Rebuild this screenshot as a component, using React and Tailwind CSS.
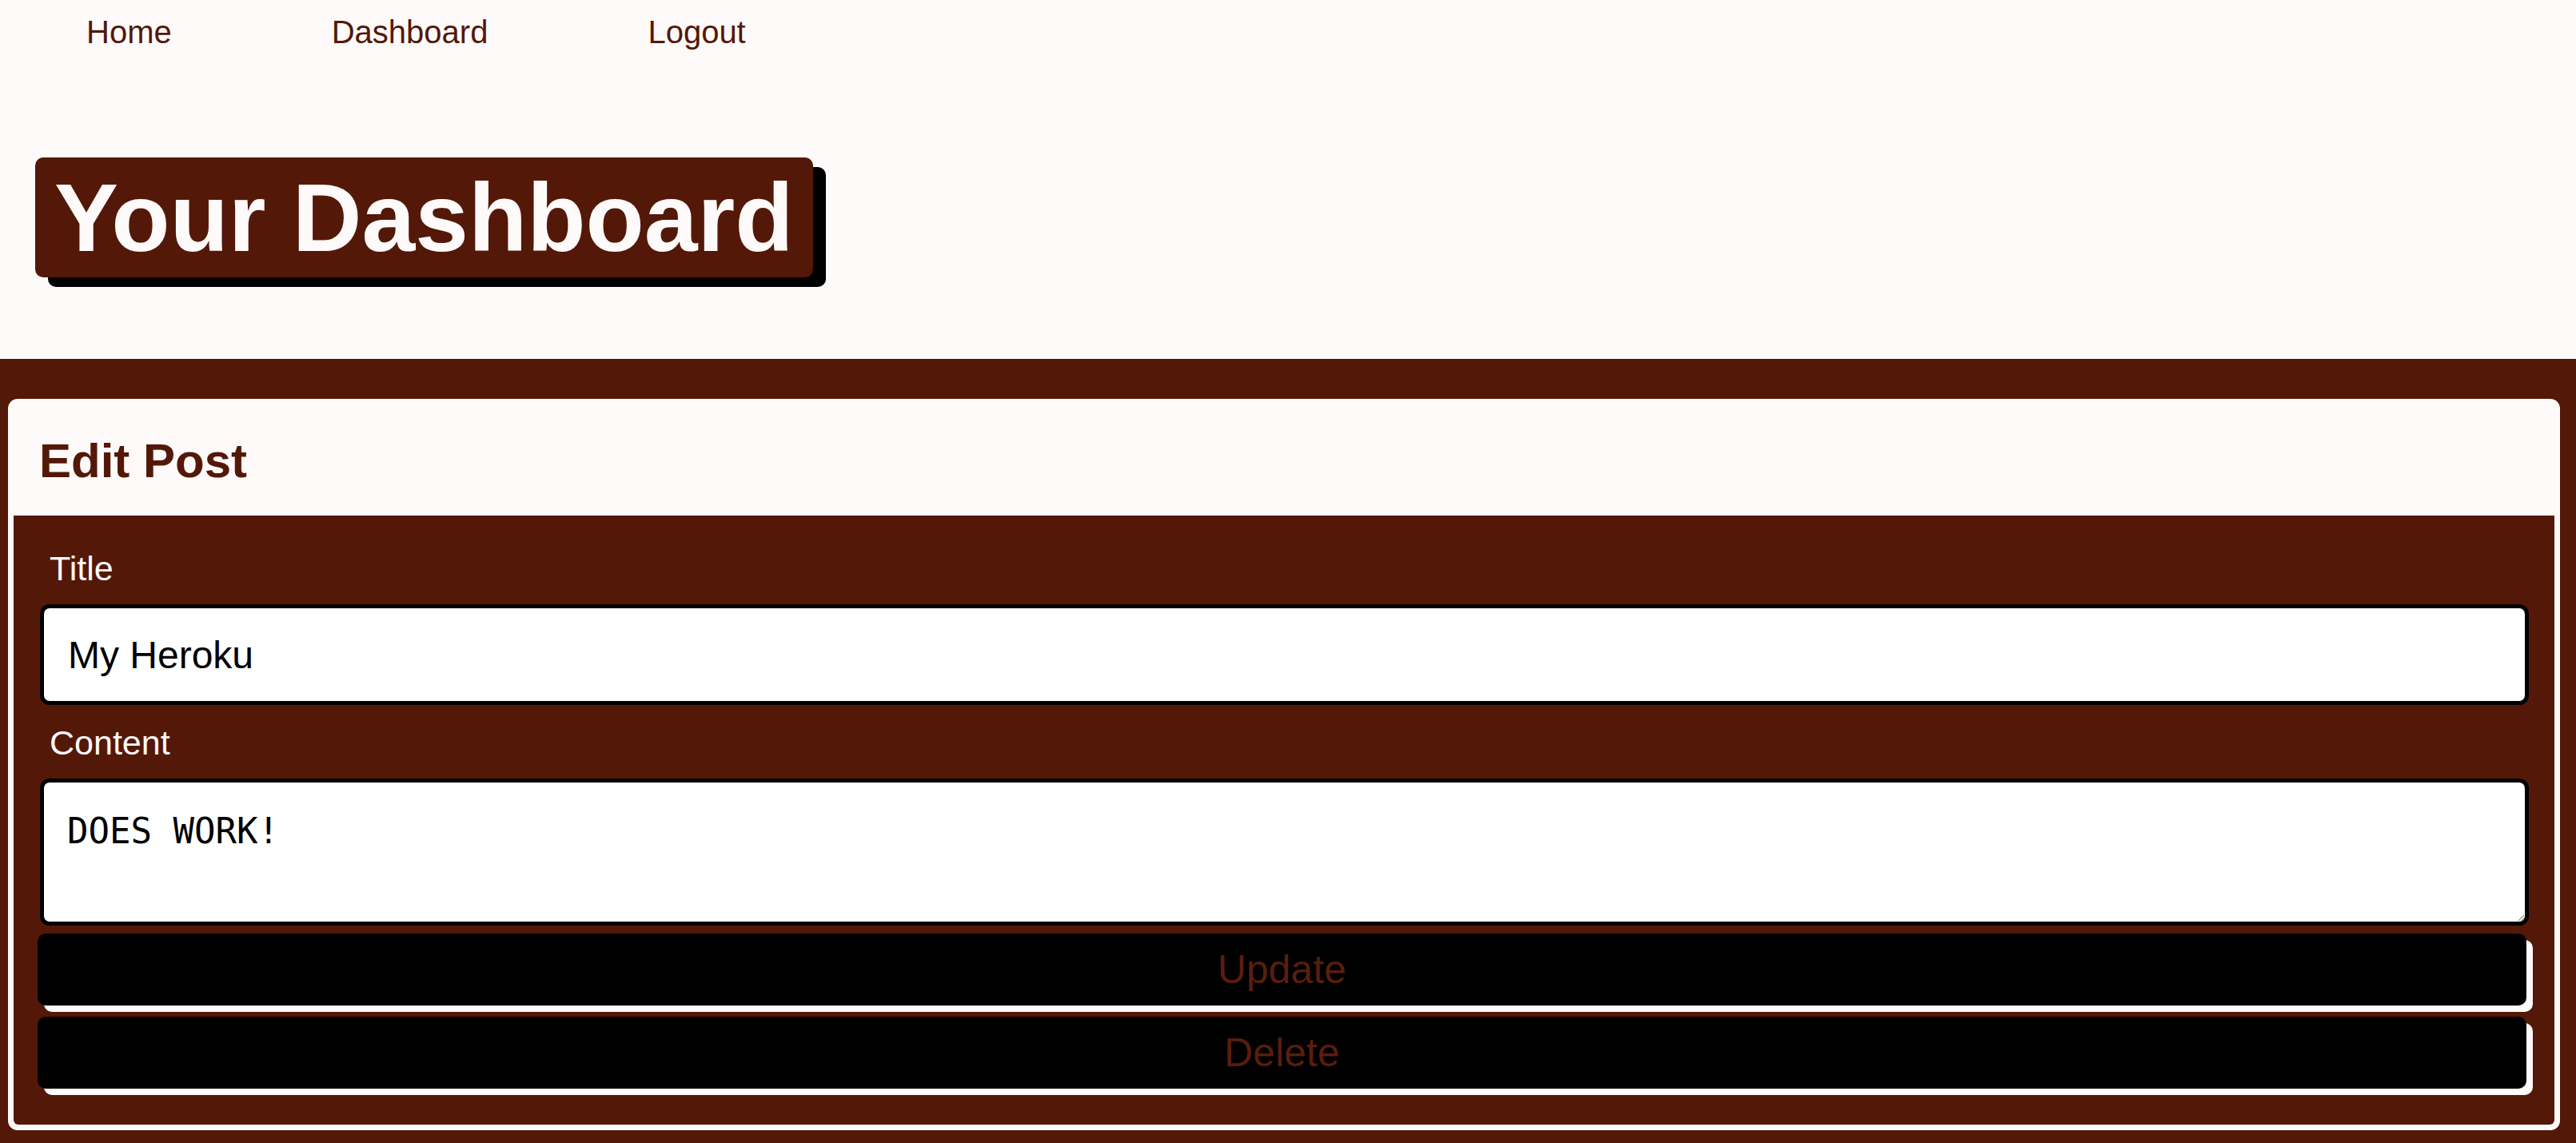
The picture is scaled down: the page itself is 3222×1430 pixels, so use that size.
const links = ["Home", "Dashboard", "Logout"];

export default function App() {
  return (
    <div className="min-h-screen bg-[#531808] font-['Liberation_Sans',Arial,sans-serif]">
      {/* Top header */}
      <header className="bg-[#fffafa] pb-[102px]">
        <nav className="flex gap-[200px] pl-[108px] h-[80px] text-[40px] leading-[80px] text-[#531808]">
          {links.map((l) => (
            <a key={l} href="#" className="block">
              {l}
            </a>
          ))}
        </nav>
        <div className="mt-[117px] ml-[44px] flex">
          <h1 className="bg-[#531808] text-[#fffafa] font-bold text-[120px] leading-[150px] h-[150px] pl-[24px] pr-[24px] rounded-[10px] shadow-[16px_12px_0_#000]">
            Your Dashboard
          </h1>
        </div>
      </header>

      {/* Edit card */}
      <main className="pt-[50px] pb-[16px]">
        <section className="ml-[10px] w-[3192px] bg-[#fffafa] rounded-[12px] px-[7px] pb-[7px]">
          <div className="h-[146px] pt-[45px] pl-[32px]">
            <h2 className="text-[60px] leading-[66px] font-bold text-[#531808]">Edit Post</h2>
          </div>
          <form className="bg-[#531808] rounded-b-[6px] pt-[41px] pb-[45px] pl-[33px] pr-[32px]">
            <label className="block text-[43px] leading-[50px] text-[#fffafa] pl-[12px]">Title</label>
            <input
              type="text"
              defaultValue="My Heroku"
              className="mt-[20px] block w-full h-[126px] bg-white border-[5px] border-black rounded-[12px] pl-[30px] text-[48px] text-black outline-none font-['Liberation_Sans',Arial,sans-serif]"
            />
            <label className="mt-[22px] block text-[43px] leading-[50px] text-[#fffafa] pl-[12px]">Content</label>
            <textarea
              defaultValue="DOES WORK!"
              className="mt-[20px] block w-full h-[184px] bg-white border-[5px] border-black rounded-[12px] pl-[29px] pt-[35px] text-[44px] leading-[51px] text-black outline-none font-['DejaVu_Sans_Mono',monospace]"
            />
            <button
              type="button"
              className="mt-[10px] -ml-[3px] block w-full h-[90px] bg-black rounded-[10px] shadow-[8px_8px_0_#fffafa] text-[50px] text-[#5a1d0e]"
            >
              Update
            </button>
            <button
              type="button"
              className="mt-[14px] -ml-[3px] block w-full h-[90px] bg-black rounded-[10px] shadow-[8px_8px_0_#fffafa] text-[50px] text-[#5a1d0e]"
            >
              Delete
            </button>
          </form>
        </section>
      </main>
    </div>
  );
}
